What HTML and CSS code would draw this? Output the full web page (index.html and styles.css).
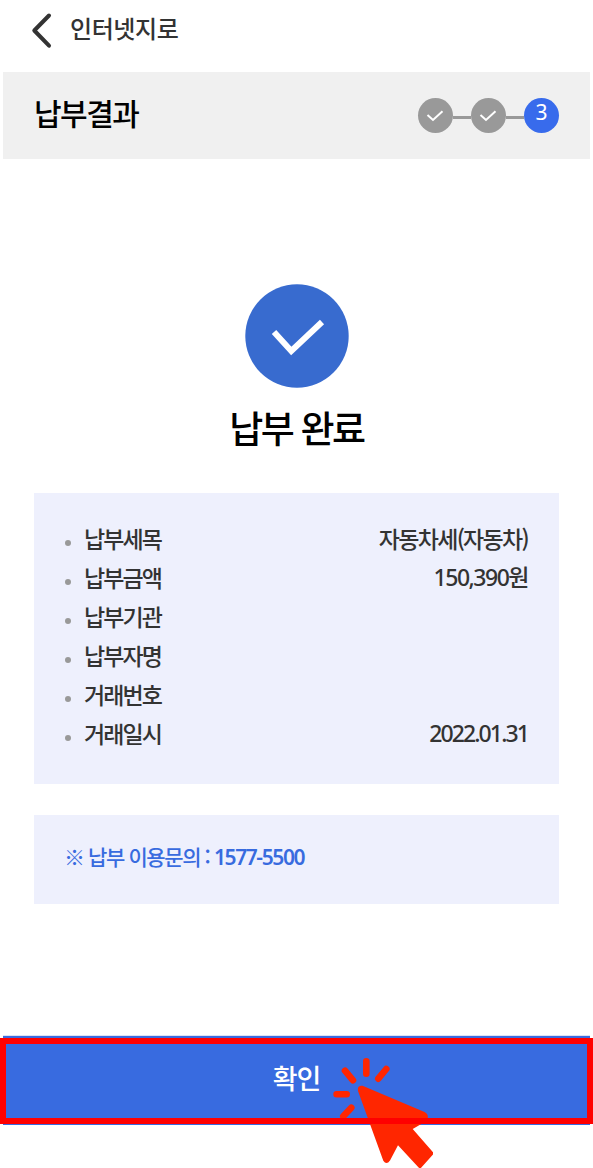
FILE: index.html
```html
<!DOCTYPE html>
<html lang="ko">
<head>
<meta charset="utf-8">
<title>인터넷지로</title>
<link rel="stylesheet" href="styles.css">
</head>
<body>
<div class="page">
  <header class="topbar">
    <svg class="back" width="24" height="40" viewBox="0 0 24 40"><path d="M20 5.500 5.300 20.500l14.700 15.200" fill="none" stroke="#333" stroke-width="4" stroke-linecap="round" stroke-linejoin="round"/></svg>
    <span class="topbar-title">인터넷지로</span>
  </header>
  <section class="stepbar">
    <h1 class="step-title">납부결과</h1>
    <div class="steps">
      <span class="dot"><svg width="35" height="35" viewBox="0 0 35 35"><path d="M9.500 17l5.500 5 9.500-8.800" fill="none" stroke="#fff" stroke-width="2"/></svg></span>
      <span class="line"></span>
      <span class="dot"><svg width="35" height="35" viewBox="0 0 35 35"><path d="M9.500 17l5.500 5 9.500-8.800" fill="none" stroke="#fff" stroke-width="2"/></svg></span>
      <span class="line"></span>
      <span class="dot current">3</span>
    </div>
  </section>
  <main class="content">
    <div class="done">
      <svg class="done-icon" width="104" height="104" viewBox="0 0 104 104"><circle cx="52" cy="52" r="51.700" fill="#386bcf"/><path d="M29 48l17.300 19L77 38" fill="none" stroke="#fff" stroke-width="6"/></svg>
      <h2 class="done-title">납부 완료</h2>
    </div>
    <ul class="details">
      <li class="row"><span class="label">납부세목</span><span class="value kind">자동차세(자동차)</span></li>
      <li class="row"><span class="label">납부금액</span><span class="value amount">150,390원</span></li>
      <li class="row"><span class="label">납부기관</span></li>
      <li class="row"><span class="label">납부자명</span></li>
      <li class="row"><span class="label">거래번호</span></li>
      <li class="row"><span class="label">거래일시</span><span class="value date">2022.01.31</span></li>
    </ul>
    <p class="notice">※ 납부 이용문의 : <span class="phone">1577-5500</span></p>
  </main>
  <div class="action">
    <button class="confirm">확인</button>
    <svg class="pointer" width="103" height="116" viewBox="0 0 103 116">
      <path d="M36.300 9.300v12.400M15 18.700l8 9.600M56.300 17l-8 9.700M6.600 42.300h10.100M21.300 55.700l-8 8.600" stroke="#ff2600" stroke-width="6.600" stroke-linecap="round"/>
      <path d="M32.500 33.700 94.500 60Q98.500 62 97.700 66 97 69 93 71L82.700 77 104 101.500 90 117 68 93.300 60 108.500Q56.500 113.500 53.300 108.700L28 39Q27 33 32.500 33.700Z" fill="#ff2600"/>
    </svg>
    <div class="highlight"></div>
  </div>
</div>
</body>
</html>
```
FILE: styles.css
```css
* { box-sizing: border-box; }
body {
  margin: 0;
  background: #fff;
  color: #333;
  font-family: "Noto Sans CJK KR", sans-serif;
  font-weight: 500;
}
h1, h2, p, ul { margin: 0; padding: 0; }
.page {
  width: 593px;
  height: 1168px;
  overflow: hidden;
  padding: 0 3px;
  display: flex;
  flex-direction: column;
}
.topbar {
  height: 72px;
  padding: 10px 0 0 26px;
  display: flex;
  align-items: flex-start;
  gap: 17px;
}
.topbar-title {
  font-size: 24px;
  line-height: 35px;
  letter-spacing: -0.4px;
}
.stepbar {
  height: 87px;
  background: #f0f0f0;
  padding: 0 31px 0 31px;
  display: flex;
  align-items: center;
  justify-content: space-between;
}
.step-title {
  font-size: 30px;
  line-height: 40px;
  font-weight: 500;
  letter-spacing: -1.5px;
  color: #000;
  padding-bottom: 8px;
}
.steps { display: flex; align-items: center; }
.dot {
  width: 35px;
  height: 35px;
  border-radius: 50%;
  background: #999;
  display: flex;
  align-items: center;
  justify-content: center;
}
.current {
  background: #386bec;
  color: #fff;
  font: 400 21px/28px "Noto Sans", sans-serif;
  align-items: flex-start;
}
.line {
  width: 18px;
  height: 3px;
  margin-top: 3px;
  background: #999;
}
.content { padding: 125px 31px 0; }
.done {
  height: 209px;
  display: flex;
  flex-direction: column;
  align-items: center;
}
.done-title {
  margin-top: 12px;
  font-size: 37px;
  line-height: 54px;
  font-weight: 500;
  letter-spacing: -2.4px;
  color: #000;
}
.details {
  height: 291px;
  padding: 28px 31px 0 31px;
  background: #eef0fd;
  list-style: none;
}
.row {
  height: 39px;
  display: flex;
  align-items: center;
  font-size: 23px;
  line-height: 36px;
  letter-spacing: -1.9px;
}
.row::before {
  content: "";
  width: 6px;
  height: 6px;
  margin: 5px 13px 0 0;
  border-radius: 50%;
  background: #999;
}
.label, .value { padding-bottom: 6px; }
.value { margin-left: auto; }
.kind { letter-spacing: -1.7px; }
.amount, .date {
  font-family: "Noto Sans", "Noto Sans CJK KR", sans-serif;
  padding-bottom: 5px;
}
.amount { letter-spacing: -1.5px; }
.date { letter-spacing: -1.9px; }
.notice {
  height: 89px;
  margin-top: 31px;
  padding: 23px 30px;
  background: #eef0fd;
  color: #386bdf;
  font-size: 21px;
  line-height: 36px;
  letter-spacing: -1.4px;
}
.phone {
  font-family: "Noto Sans", sans-serif;
  font-weight: 600;
  letter-spacing: -1.4px;
}
.action {
  position: relative;
  height: 91px;
  margin: 131px 0 0;
  border-top: 1px solid #dce3f5;
}
.confirm {
  display: block;
  width: 100%;
  height: 89px;
  border: 0;
  padding: 0 0 5px;
  background: #386be0;
  color: #fff;
  font: 500 27px/38px "Noto Sans CJK KR", sans-serif;
  letter-spacing: -1.2px;
}
.pointer {
  position: absolute;
  left: 327px;
  top: 16px;
}
.highlight {
  position: absolute;
  left: -3px;
  right: -3px;
  top: 2px;
  height: 86px;
  border: 6px solid #f00;
}
```
